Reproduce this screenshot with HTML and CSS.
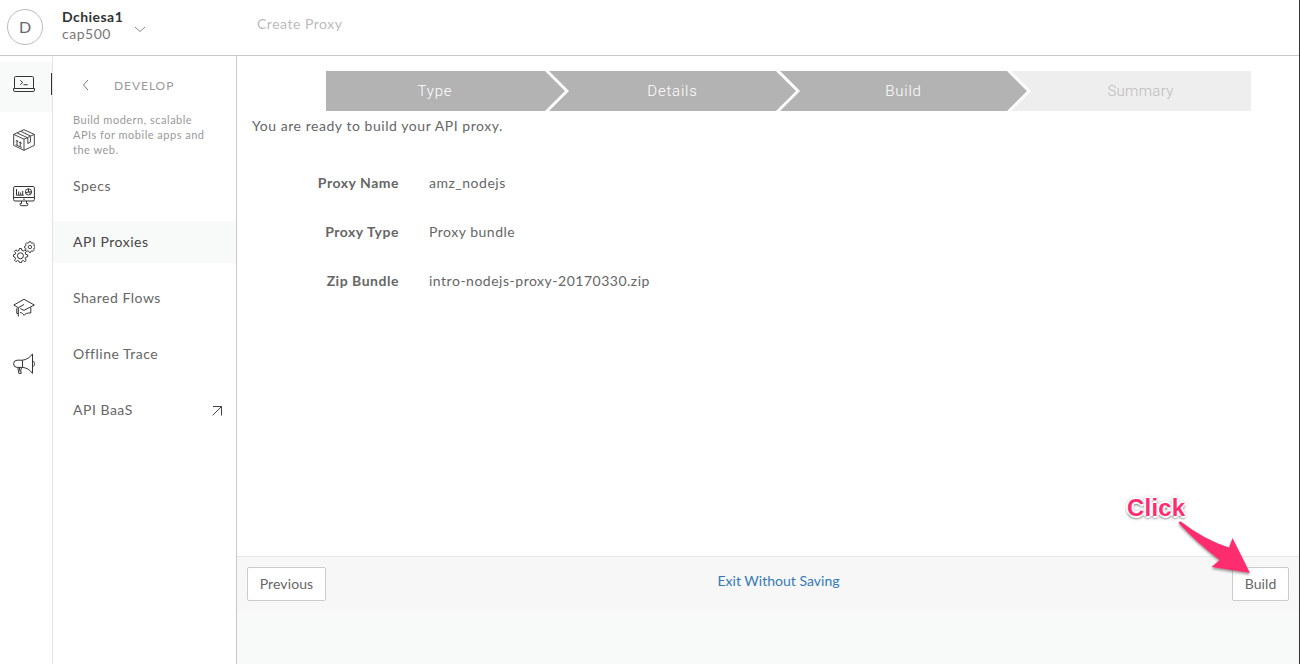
FILE: index.html
```html
<!DOCTYPE html>
<html lang="en">
<head>
<meta charset="utf-8">
<title>Create Proxy</title>
<link rel="stylesheet" href="styles.css">
</head>
<body>
<div class="app">
  <header class="header">
    <div class="avatar">D</div>
    <div class="account">
      <span class="account-name">Dchiesa1</span>
      <span class="account-org">cap500</span>
    </div>
    <svg class="caret" width="12" height="7" viewBox="0 0 12 7"><path d="M1 1l5 4.500L11 1"/></svg>
    <span class="page-title">Create Proxy</span>
  </header>
  <div class="body">
    <nav class="rail">
      <a class="rail-item rail-item-active"><svg class="icon" viewBox="0 0 22 22"><rect x="1.500" y="3.500" width="19" height="12" rx="1.200"/><path d="M.5 15.500h21v1.600q0 1.400-1.400 1.400H1.900Q.5 18.500.5 17.100z"/><path d="M7.300 7.300l2.400 2.200-2.400 2.200M10.500 11.700h4.200"/></svg></a>
      <a class="rail-item"><svg class="icon icon-fine" viewBox="0 0 22 22"><path d="M11 .7L.7 5.400v11L11 21.300l10.300-4.900v-11zM.7 5.400L11 10.200l10.300-4.800M11 10.200v11.100M4.200 4l10.200 4.700M7.600 2.300l10.200 4.800M14.800 9v5.500l2.600-1.300V8M4 16v-4.500M7.300 17.500V13M2.900 12.500L4 11.300l1 1.900M6.200 14l1.100-1.200 1.100 1.900M2.700 15.700l6.100 2.800"/></svg></a>
      <a class="rail-item"><svg class="icon" viewBox="0 0 22 22"><rect x=".6" y="1.500" width="20.800" height="14.500" rx="1.300"/><path d="M.6 12.500h20.800M10.200 14.200h1.600M8.500 16v2.500H7.200v1.200q0 1 1 1h5.600q1 0 1-1v-1.200h-1.300V16M3.500 4v6.200h7.300M5.700 10V6.500M7.700 10V7.500M9.700 10V6"/><circle cx="15.500" cy="6.900" r="3.100"/><path d="M15.500 3.800v3.100h3.100M15.500 6.900l-2.900 1M15.500 6.900l2.200 2.200"/></svg></a>
      <a class="rail-item"><svg class="icon" viewBox="0 0 22 22"><path d="M6.400 7.500h2l.4 1.900 1.500.6 1.600-1.100 1.400 1.400-1.100 1.600.6 1.500 1.900.4v2l-1.900.4-.6 1.500 1.100 1.600-1.400 1.400-1.600-1.100-1.500.6-.4 1.500h-2L6 20.200l-1.500-.6-1.600 1.100-1.400-1.400 1.100-1.600-.6-1.500-1.500-.4v-2l1.500-.4.6-1.500-1.100-1.600 1.400-1.400L4.500 10 6 9.400z"/><circle cx="7.400" cy="14.800" r="3"/><path d="M16 .7h1.800l.3 1.200.9.400 1.100-.6 1.200 1.200-.6 1.100.4.900 1 .3v1.700l-1.100.3-.4.900.6 1.100-1.200 1.200-1.100-.6-.9.400-.3 1.200H16l-.3-1.200-.9-.4-1.100.6-1.200-1.200.6-1.100-.4-.9-1.100-.3V5.200l1.100-.3.4-.9-.6-1.100 1.200-1.200 1.100.6.9-.4z" stroke-width=".9"/><circle cx="16.900" cy="6" r="1.700" stroke-width=".9"/></svg></a>
      <a class="rail-item"><svg class="icon" viewBox="0 0 22 22"><path d="M5.300 10L.8 7.200 11 1.500l10.300 5.700L11 12.600 7.300 10.800M11 6.700L5.300 9.900v8.800M3.800 10.500v5.200h1.500M7 14.700c2 .2 3.200 1.200 4 2.900 1.100-1.700 3.300-2.600 6.800-2.500V9.500" transform="translate(0 .8)"/></svg></a>
      <a class="rail-item"><svg class="icon" viewBox="0 0 22 22"><path d="M9.500 7.200H4.200a3.600 3.600 0 0 0 0 7.200h5.300zM9.500 7.200c4.300-.6 7.600-2.900 10-6.300v19.500c-2.400-3.500-5.700-5.600-10-6M19.500 7.600c2.600 1 2.600 5.300 0 6.300M4.800 14.400l1.100 6h2.300l-.5-3.200 1-2.800M6.300 14.400l.7 4"/></svg></a>
    </nav>
    <aside class="menu">
      <div class="menu-head">
        <svg class="back" width="7" height="12" viewBox="0 0 7 12"><path d="M6 1L1.500 6 6 11"/></svg>
        <span class="menu-title">DEVELOP</span>
      </div>
      <p class="menu-text">Build modern, scalable<br>APIs for mobile apps and<br>the web.</p>
      <a class="menu-item">Specs</a>
      <a class="menu-item menu-item-active">API Proxies</a>
      <a class="menu-item">Shared Flows</a>
      <a class="menu-item">Offline Trace</a>
      <a class="menu-item">API BaaS<svg class="external" width="11" height="11" viewBox="0 0 11 11"><path d="M.7 10.300L9.500 1.500M1 1.500h8.500v9"/></svg></a>
    </aside>
    <main class="content">
      <div class="wizard">
        <div class="steps">
          <div class="step step-first">Type</div>
          <div class="step">Details</div>
          <div class="step">Build</div>
          <div class="step step-last">Summary</div>
        </div>
        <p class="intro">You are ready to build your API proxy.</p>
        <dl class="summary">
          <dt>Proxy Name</dt><dd>amz_nodejs</dd>
          <dt>Proxy Type</dt><dd>Proxy bundle</dd>
          <dt>Zip Bundle</dt><dd>intro-nodejs-proxy-20170330.zip</dd>
        </dl>
      </div>
      <footer class="actions">
        <button class="button">Previous</button>
        <a class="exit">Exit Without Saving</a>
        <button class="button button-build">Build</button>
      </footer>
    </main>
  </div>
  <div class="callout">
    <span class="callout-text">Click</span>
    <svg class="callout-arrow" width="78" height="62" viewBox="0 0 78 62"><path d="M4 3.500Q3 1.500 5.800 1.500Q30 20 54 27.500L57.500 18L75 53L36.500 47L44.500 40Q22 23 4 3.500z"/></svg>
  </div>
</div>
</body>
</html>
```

FILE: styles.css
```css
* { box-sizing: border-box; }

body {
  margin: 0;
  font-family: Lato, "Open Sans", sans-serif;
  font-size: 14px;
  letter-spacing: 0.51px;
  color: #666;
}

.app {
  position: relative;
  display: flex;
  flex-direction: column;
  width: 1300px;
  height: 664px;
  overflow: hidden;
  background: #fff;
  border-right: 1px solid #333;
}

svg { fill: none; stroke: #555; }

.header {
  display: flex;
  height: 56px;
  padding: 9px 0 0 7px;
  border-bottom: 1px solid #c8c8c8;
}

.avatar {
  width: 36px;
  height: 36px;
  border: 1px solid #bbb;
  border-radius: 50%;
  font-size: 16px;
  line-height: 34px;
  text-align: center;
  letter-spacing: 0;
}

.account {
  display: flex;
  flex-direction: column;
  width: 73px;
  margin: -1px 0 0 19px;
  line-height: 17px;
}

.account-name {
  color: #333;
  font-weight: 700;
  letter-spacing: 0.45px;
}

.account-org { color: #777; }

.caret { margin-top: 17px; margin-left: -1px; stroke: #888; }

.page-title {
  margin: 6px 0 0 111px;
  line-height: 18px;
  color: #bbb;
}

.body { display: flex; flex: 1; }

.rail {
  width: 53px;
  padding-top: 6px;
  border-right: 1px solid #e3e3e3;
}

.rail-item {
  display: block;
  height: 50px;
  margin-bottom: 6px;
  padding: 11px 0 0 13px;
}

.rail-item-active {
  position: relative;
  background: #f8faf9;
}

.rail-item-active::after {
  content: "";
  position: absolute;
  top: 11px;
  right: 0;
  width: 1px;
  height: 22px;
  background: #333;
}

.icon { display: block; width: 22px; height: 22px; stroke: #333; }
.icon-fine { stroke-width: 0.9; }

.menu {
  width: 184px;
  border-right: 1px solid #c8c8c8;
}

.menu-head {
  display: flex;
  align-items: center;
  gap: 25px;
  height: 20px;
  margin: 19px 0 0 29px;
}

.back { stroke: #777; }
.menu-title { font-size: 12px; letter-spacing: 0.95px; color: #999; }

.menu-text {
  margin: 17px 0 8px 20px;
  font-size: 11px;
  line-height: 15px;
  letter-spacing: 0.5px;
  color: #999;
}

.menu-item {
  display: flex;
  align-items: center;
  justify-content: space-between;
  height: 42px;
  margin-bottom: 14px;
  padding: 0 13px 2px 20px;
}

.menu-item-active { background: #f8faf9; color: #444; }
.external { margin-top: 2px; stroke: #444; }

.content { flex: 1; background: #f8faf9; }

.wizard {
  height: 500px;
  padding: 15px 0 0 15px;
  background: #fff;
}

.steps {
  display: flex;
  width: 925px;
  margin-left: 74px;
}

.step {
  width: 247px;
  height: 40px;
  margin-left: -16px;
  background: #b3b3b3;
  clip-path: polygon(0 0, 227px 0, 100% 50%, 227px 100%, 0 100%, 20px 50%);
  color: #fff;
  font-family: "Helvetica Neue", Roboto, sans-serif;
  font-size: 15px;
  font-weight: 300;
  letter-spacing: 0.8px;
  line-height: 40px;
  text-align: center;
}

.step-first {
  width: 239px;
  margin-left: 0;
  padding-right: 21px;
  clip-path: polygon(0 0, 219px 0, 100% 50%, 219px 100%, 0 100%);
}

.step-last {
  width: 240px;
  padding-left: 19px;
  background: #eee;
  clip-path: polygon(0 0, 100% 0, 100% 100%, 0 100%, 20px 50%);
  color: #bbb;
  letter-spacing: 0.3px;
}

.intro { margin: 5px 0 0; line-height: 20px; letter-spacing: 0.55px; }

.summary {
  display: grid;
  grid-template-columns: 147px 1fr;
  column-gap: 30px;
  row-gap: 29px;
  margin: 37px 0 0;
  line-height: 20px;
}

.summary dt { font-weight: 700; text-align: right; letter-spacing: 0.52px; }
.summary dd { margin: 0; }

.actions {
  display: flex;
  justify-content: space-between;
  height: 55px;
  padding: 10px 10px 0;
  border-top: 1px solid #e7e7e7;
  background: #f7f7f7;
}

.button {
  height: 34px;
  width: 79px;
  padding: 0 0 2px;
  border: 1px solid #ccc;
  border-radius: 2px;
  background: #fff;
  color: #666;
  font: 14px Lato, sans-serif;
  letter-spacing: 0.1px;
}

.button-build { width: 57px; }

.exit {
  margin-left: -1px;
  line-height: 28px;
  letter-spacing: 0.02px;
  color: #337ab7;
}

.callout {
  position: absolute;
  left: 1127px;
  top: 493px;
  color: #ff2d70;
}

.callout-text {
  display: block;
  font: 700 24px/30px "Liberation Sans", Arial, sans-serif;
  letter-spacing: 0.2px;
  text-shadow: -2px 0 #fff, 2px 0 #fff, 0 -2px #fff, 0 2px #fff, 1px 1px #fff, -1px -1px #fff, 0 2px 3px rgba(0, 0, 0, 0.8), 0 0 4px rgba(0, 0, 0, 0.5);
}

.callout-arrow {
  position: absolute;
  left: 48px;
  top: 27px;
  fill: #ff2d70;
  stroke: none;
  filter: drop-shadow(0 2px 1px rgba(0, 0, 0, 0.35));
}
```
